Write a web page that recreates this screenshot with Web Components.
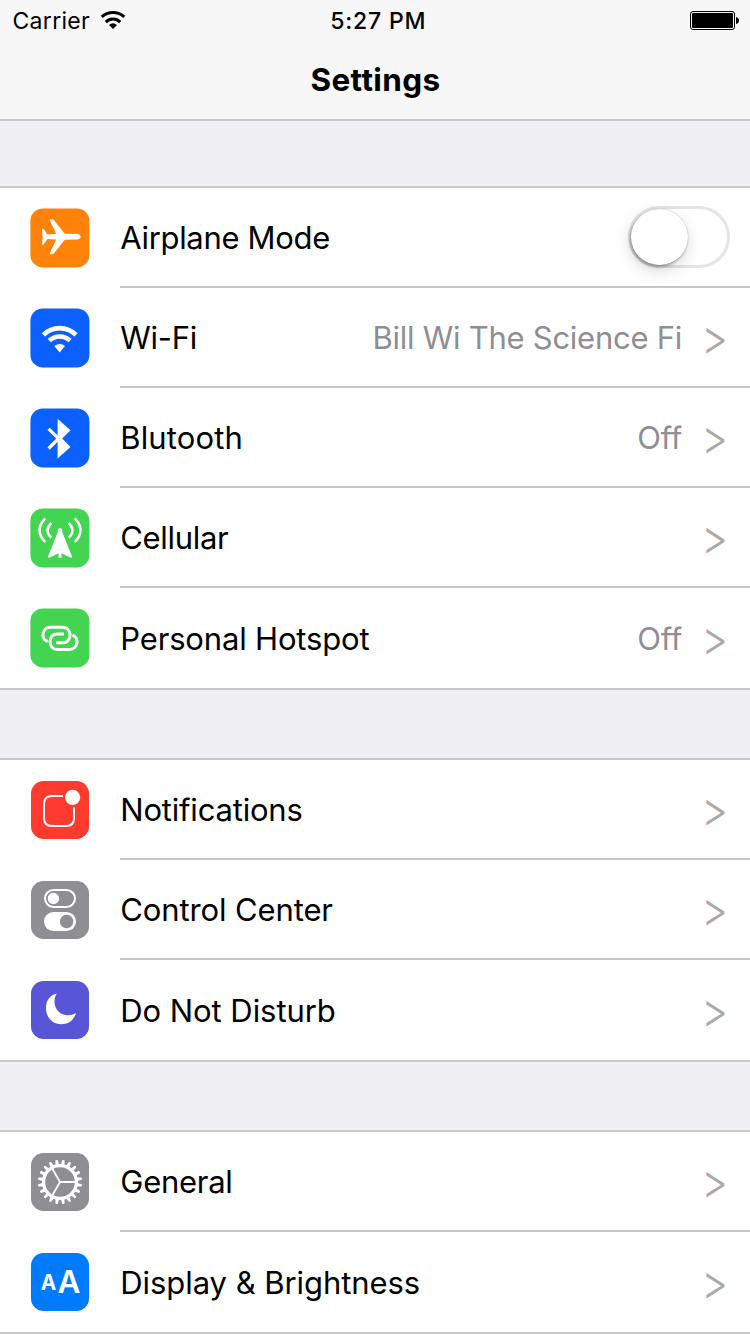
<!DOCTYPE html>
<html lang="en">
<head>
<meta charset="utf-8">
<title>Settings</title>
<style>
html, body { margin: 0; padding: 0; }
body { width: 750px; height: 1334px; overflow: hidden; background: #efeff4; font-family: Inter, "Liberation Sans", sans-serif; color: #000; }
</style>
</head>
<body>
<settings-screen></settings-screen>
<script>
const define = (name, html, init) => {
  const template = document.createElement('template');
  template.innerHTML = html;
  customElements.define(name, class extends HTMLElement {
    constructor() {
      super();
      this.attachShadow({ mode: 'open' }).append(template.content.cloneNode(true));
    }
    connectedCallback() { if (init) init.call(this, this.shadowRoot); }
  });
};

const big = c => `<rect x=".4" y=".4" width="59" height="59" rx="12.5" fill="${c}"/>`;
const tile = c => `<rect x="1" y="1" width="58" height="58" rx="12.5" fill="${c}"/>`;
const teeth = Array.from({ length: 20 }, (_, i) =>
  `<path d="M28 14L28.8 8.4Q29 7.7 30 7.7Q31 7.7 31.2 8.4L32 14Z" transform="rotate(${i * 18 + 9} 30 30)"/>`).join('');

const icons = {
  airplane: big('#ff8308') + `<path fill="#fff" d="M47 25.9Q50.6 26.4 50.6 28.7Q50.6 31 47 31.5L34.8 31.7L24 45.2Q23.3 46.2 22.3 46.2H20.4Q19.4 46.2 19.8 45L26.2 31.6L17.6 31L13.6 36.4Q12.2 37.3 12 36L12.6 28.7L12 21.4Q12.2 20.1 13.6 21L17.6 26.4L26.2 25.8L19.8 12.4Q19.4 11.2 20.4 11.2H22.3Q23.3 11.2 24 12.2L34.8 25.7Z"/>`,
  wifi: big('#0b60ff') + `<g fill="none" stroke="#fff" stroke-width="4.6"><path d="M13.4 26.9A22.9 22.9 0 0 1 46 26.9"/><path d="M19.3 32.7A14.8 14.8 0 0 1 40.1 32.7"/></g><path fill="#fff" d="M24.4 38Q29.7 33.9 35 38L29.7 44.4Z"/>`,
  bluetooth: big('#0b60ff') + `<path fill="#fff" d="M27.6 10.8L40.5 22.3L32.2 30.5L40.5 39L27.6 50.4Z"/><path fill="none" stroke="#fff" stroke-width="3.2" d="M18.6 20.8L28.6 30.5L18.6 40.5"/>`,
  cellular: big('#43d551') + `<circle cx="30" cy="22.6" r="2.4" fill="#fff"/><path fill="#fff" d="M28 23.5H32L42.3 49.2L41 49.8L31.5 45.2V49.8H28.5V45.2L19 49.8L17.7 49.2Z"/><g fill="none" stroke="#fff" stroke-width="2.5"><path d="M15.2 10.4Q3.8 22.2 15.2 34"/><path d="M21.4 15Q13.6 22.4 21.4 29.7"/><path d="M44.8 10.4Q56.2 22.2 44.8 34"/><path d="M38.6 15Q46.4 22.4 38.6 29.7"/></g>`,
  hotspot: big('#43d551') + `<g fill="none" stroke="#fff" stroke-width="3"><path d="M17.6 33.5C10.2 31 12 19.2 20.5 19.2H32.5C42.4 19.2 42.4 34.7 33 34.7H26"/><path d="M42.4 27.1C49.8 29.6 48 41.4 39.5 41.4H27.5C17.6 41.4 17.6 25.9 27 25.9H34"/></g>`,
  notifications: tile('#ff3b30') + `<path fill="none" stroke="#fff" stroke-width="2" d="M33 16H22Q14 16 14 24V38Q14 46 22 46H36Q44 46 44 38V27.3"/><circle cx="42.6" cy="17.4" r="7.6" fill="#fff"/>`,
  control: tile('#8e8e93') + `<rect x="15" y="10" width="30" height="17" rx="8.5" fill="none" stroke="#fff" stroke-width="2"/><circle cx="23.4" cy="18.5" r="5.7" fill="#fff"/><rect x="14" y="32" width="32" height="19" rx="9.5" fill="#fff"/><circle cx="36.6" cy="41.5" r="6.7" fill="#8e8e93"/>`,
  moon: tile('#5856d6') + `<path fill="#fff" d="M26.7 13.6C18 16 15.6 23 16 29.5C16.6 38 23 44.2 31 44.2C38 44.2 43.5 41 46 33.1C40 36.5 33 36 28.5 31.5C24 27 23.2 20 26.7 13.6Z"/>`,
  general: tile('#8e8e93') + `<g fill="#fff">${teeth}</g><circle cx="30" cy="30" r="16.4" fill="none" stroke="#fff" stroke-width="3.2"/><path fill="none" stroke="#fff" stroke-width="1.8" d="M30 30H45M30 30L22.5 17M30 30L22.5 43"/>`,
  display: tile('#007aff') + `<g fill="#fff" font-family="Inter, sans-serif" font-weight="600"><text x="10.8" y="38.3" font-size="20.8" font-weight="650">A</text><text x="27.4" y="41.4" font-size="31.5">A</text></g>`
};

define('settings-icon', `
<style>:host{display:block;width:60px;height:60px}svg{display:block}</style>
<svg width="60" height="60" viewBox="0 0 60 60"></svg>`, function (root) {
  root.querySelector('svg').innerHTML = icons[this.getAttribute('name')] || '';
});

define('toggle-switch', `
<style>
:host{display:block;box-sizing:border-box;width:102px;height:62px;border:3px solid #e5e5e5;border-radius:31px;background:#fff}
i{display:block;width:56.5px;height:56.5px;margin:-.5px 0 0 0;border-radius:50%;background:#fff;box-shadow:0 0 1px rgba(0,0,0,.3),-1px 2px 3px rgba(0,0,0,.3),-1px 5px 16px rgba(0,0,0,.16)}
</style><i></i>`);

define('status-bar', `
<style>
:host{display:flex;justify-content:space-between;height:40px;line-height:40px;font-size:24px;padding:0 11px 0 12.5px}
span,div{display:flex;flex:1;align-items:center}
.t{flex:none;font-weight:500;letter-spacing:.8px;font-size:23px;padding:2px 0 0 5px;height:38px}
.c{letter-spacing:.3px;font-size:23px;font-weight:400;padding-top:2px}
.r{justify-content:flex-end}
.w{margin-left:9.5px}
</style>
<span><b class="c">Carrier</b><svg class="w" width="26" height="20" viewBox="0 0 26 20"><g fill="none" stroke="#000" stroke-width="3"><path d="M1.7 6.9A16.5 16.5 0 0 1 24.3 6.9"/><path d="M5.8 12.1A10.2 10.2 0 0 1 20.2 12.1"/></g><path d="M9 15Q13 11.5 17 15L13 19Z"/></svg></span>
<div class="t">5:27 PM</div>
<div class="r"><svg width="50" height="20" viewBox="0 0 50 20"><rect x="1.5" y="1.5" width="44" height="18" rx="2.5" fill="none" stroke="#000"/><rect x="3" y="3" width="41" height="15" rx="1" /><path d="M47 7Q50 7.5 50 10.5Q50 13.5 47 14Z"/></svg></div>`);

define('nav-header', `
<style>
:host{display:block;background:#f7f7f7;height:119px;border-bottom:2px solid #c8c7cc}
h1{margin:0;height:79px;line-height:80px;font-size:31.5px;font-weight:650;text-align:center;letter-spacing:.4px;padding-left:1px}
</style>
<status-bar></status-bar><h1><slot></slot></h1>`);

define('settings-group', `
<style>:host{display:block;background:#fff;border-top:2px solid #c8c7cc;border-bottom:2px solid #c8c7cc}</style><slot></slot>`);

define('settings-row', `
<style>
:host{display:flex;height:100px;padding-left:30px}
settings-icon{margin:20px 30px 0 0;flex:none}
.body{flex:1;display:flex;align-items:center;box-sizing:border-box;height:100px;border-bottom:2px solid #c8c7cc;font-size:31px;line-height:40px}
:host(:last-child) .body{border-bottom:0}
.label,.value{padding-top:1px;white-space:nowrap}
.label{flex:1;letter-spacing:var(--ls);padding-left:.3px}
.value{color:#8e8e93;letter-spacing:-.26px}
.go{width:47px;box-sizing:border-box;margin-left:21.6px;margin-right:-.6px;color:#aaa;font-size:41px;font-weight:350;transform:translate(-2.4px,.6px) scaleY(1.18)}
::slotted(toggle-switch){margin-right:20px}
</style>
<settings-icon></settings-icon>
<div class="body"><span class="label"><slot></slot></span><span class="value"><slot name="value"></slot></span><slot name="end"><span class="go">&gt;</span></slot></div>`, function (root) {
  const icon = root.querySelector('settings-icon');
  icon.setAttribute('name', this.getAttribute('icon'));
  icon.connectedCallback();
  this.style.setProperty('--ls', this.getAttribute('tracking') + 'px');
});

define('settings-screen', `
<style>:host{display:block}settings-group{margin-top:68px}settings-group.first{margin-top:65px}</style>
<nav-header>Settings</nav-header>
<settings-group class="first">
<settings-row icon="airplane" tracking="-.33">Airplane Mode<toggle-switch slot="end"></toggle-switch></settings-row>
<settings-row icon="wifi" tracking="-.3">Wi-Fi<span slot="value">Bill Wi The Science Fi</span></settings-row>
<settings-row icon="bluetooth" tracking="0.13">Blutooth<span slot="value">Off</span></settings-row>
<settings-row icon="cellular" tracking="-.32">Cellular</settings-row>
<settings-row icon="hotspot" tracking="-.17">Personal Hotspot<span slot="value">Off</span></settings-row>
</settings-group>
<settings-group>
<settings-row icon="notifications" tracking="-.2">Notifications</settings-row>
<settings-row icon="control" tracking="-.12">Control Center</settings-row>
<settings-row icon="moon" tracking="-.06">Do Not Disturb</settings-row>
</settings-group>
<settings-group>
<settings-row icon="general" tracking="-.27">General</settings-row>
<settings-row icon="display" tracking="-.06">Display &amp; Brightness</settings-row>
</settings-group>`);
</script>
</body>
</html>
